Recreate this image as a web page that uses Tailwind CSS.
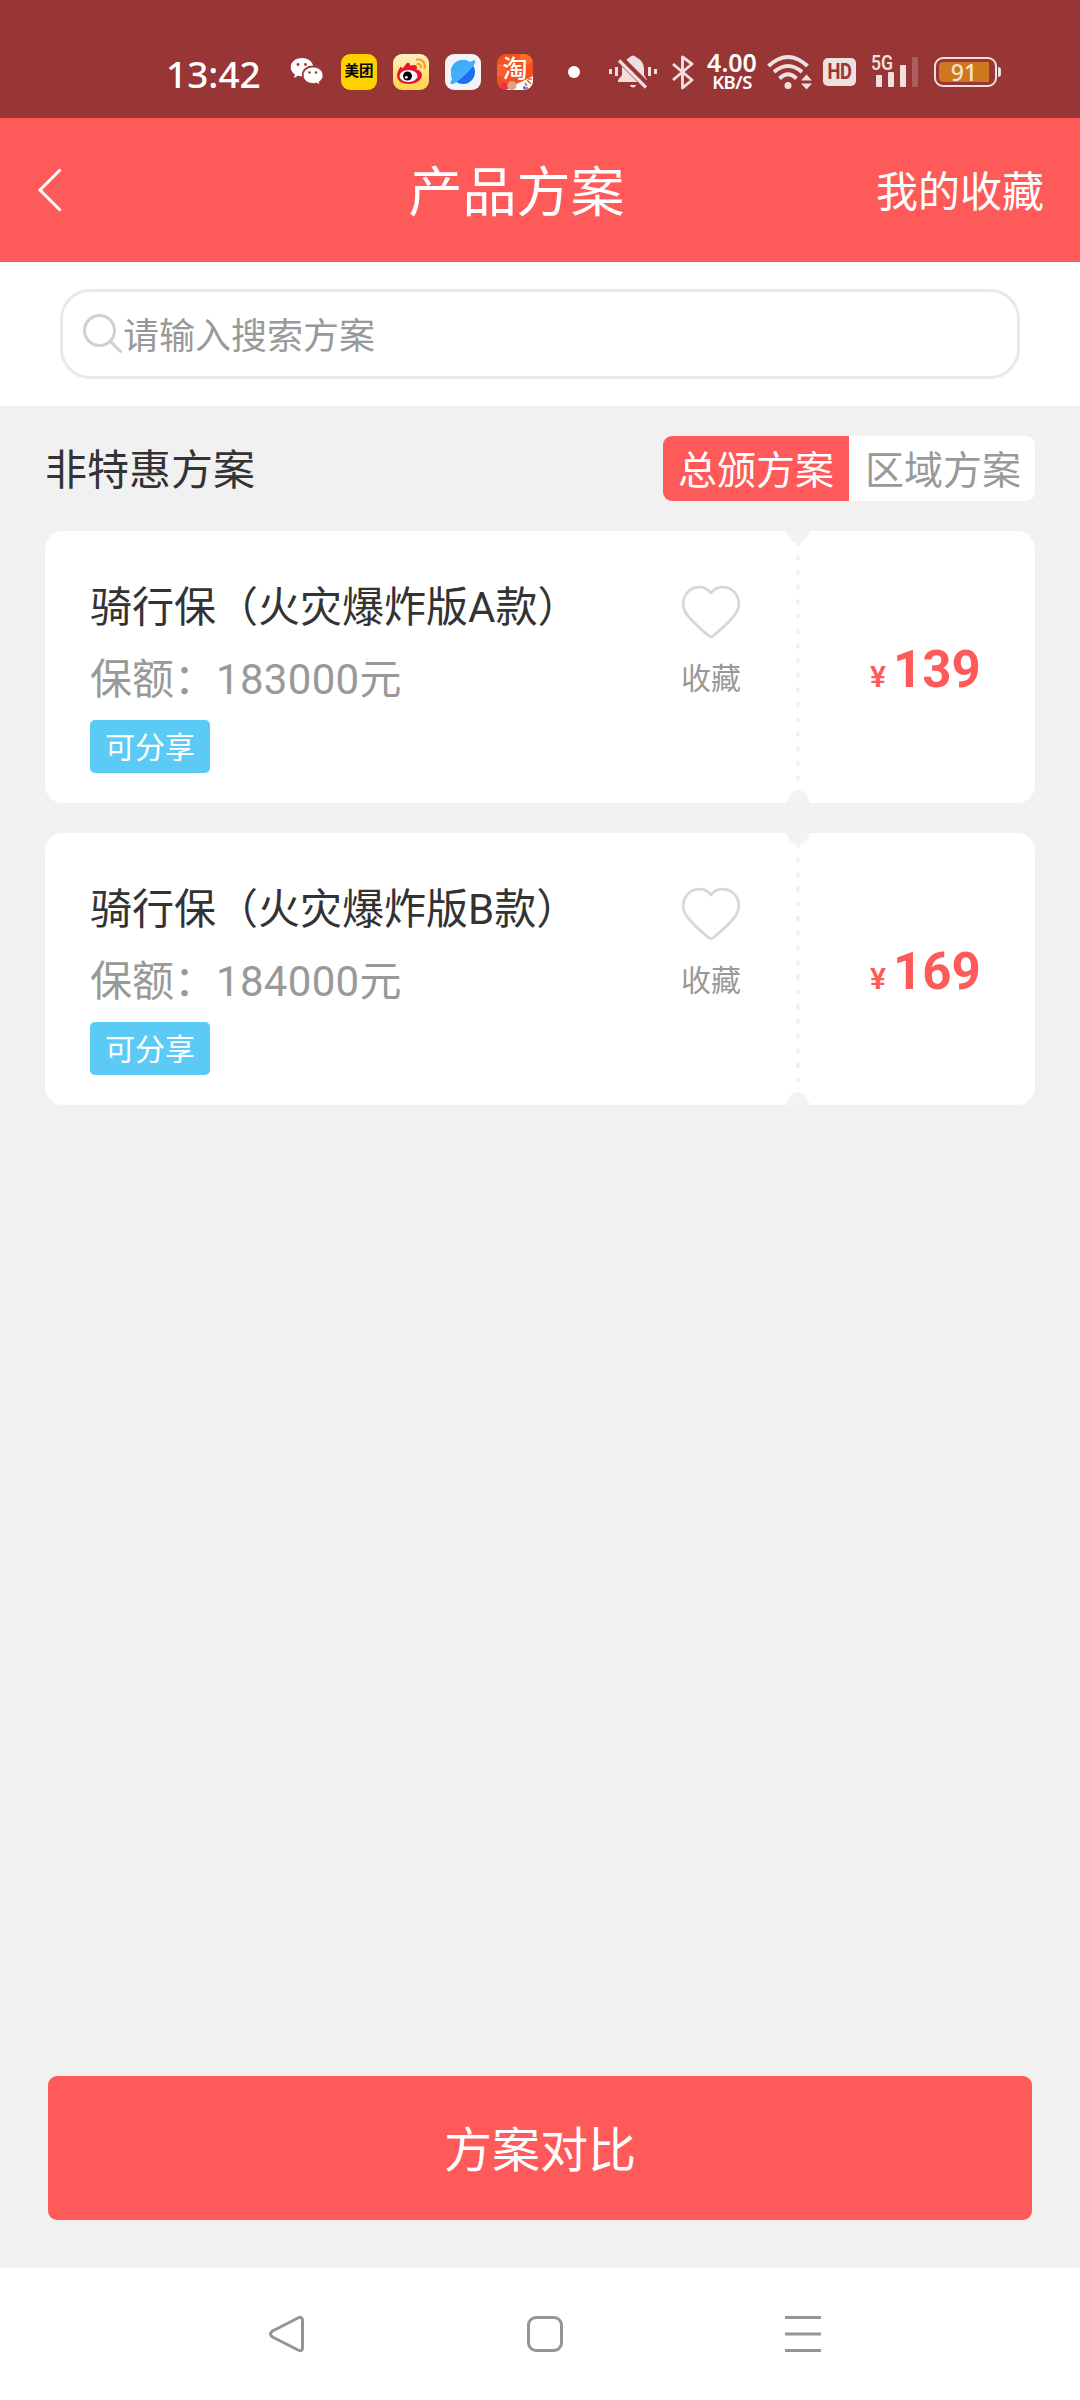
<!DOCTYPE html>
<html lang="zh-CN">
<head>
<meta charset="utf-8">
<title>产品方案</title>
<script src="https://cdn.jsdelivr.net/npm/@tailwindcss/browser@4"></script>
</head>
<body class="bg-[#f1f1f1]">
<div class="w-[1080px] h-[2400px] flex flex-col overflow-hidden font-[Roboto,'Noto_Sans_CJK_SC',sans-serif] text-[#333]">

  <!-- status bar -->
  <div class="h-[118px] shrink-0 bg-[#983535] flex items-start">
    <div class="w-full h-[90px] mt-[27px] flex items-center pl-[166px] text-white">
      <div class="w-[95px] pt-0.5 text-[37px] leading-none font-medium font-['Noto_Sans',sans-serif] whitespace-nowrap">13:42</div>
      <svg class="ml-[29px] w-[34px] h-[30px] shrink-0" viewBox="0 0 34 30">
        <path fill="#fff" d="M12 1C5.500 1 .7 5 .7 10.200c0 3 1.600 5.500 4.200 7.200L4 21l4-2.200c1.500.5 2.500.6 4 .6-1-6 4-11 11.200-10.900C22 4 17.500 1 12 1z"/>
        <path fill="#fff" stroke="#983535" stroke-width=".8" d="M23 10c-5.600 0-9.800 3.700-9.800 8.300 0 4.700 4.300 8.200 9.800 8.200 1.200 0 2.300-.2 3.500-.6L30 28l-.9-3.100c2.400-1.600 3.900-3.900 3.900-6.500C33 13.700 28.700 10 23 10z"/>
        <g fill="#983535"><circle cx="8" cy="7.500" r="1.400"/><circle cx="15.500" cy="7.500" r="1.400"/><circle cx="19.500" cy="15.500" r="1.200"/><circle cx="26" cy="15.500" r="1.200"/></g>
      </svg>
      <div class="ml-[17px] size-9 shrink-0 rounded-[9px] bg-[#ffd000] text-black text-[14.5px] leading-none font-bold flex items-center justify-center whitespace-nowrap">美团</div>
      <svg class="ml-4 size-9 shrink-0" viewBox="0 0 36 36">
        <defs><linearGradient id="wb" x1="0" y1="0" x2="0" y2="1"><stop offset="0" stop-color="#fff0c4"/><stop offset="1" stop-color="#ffd447"/></linearGradient></defs>
        <rect width="36" height="36" rx="9" fill="url(#wb)"/>
        <path fill="#e6162d" d="M14 9c2-.8 3.500.5 3 3 3-1.400 7-1.500 7 1.500 0 1-.5 1.500-.5 2 3 .8 5.500 2.500 5.500 5.500C29 26 23 30 16 30S4 26.500 4 21.500C4 18 6 14.500 8 12.500l1.500 2z"/>
        <ellipse cx="15.500" cy="22" rx="9" ry="6" fill="#fff"/><circle cx="14.500" cy="22" r="4.500" fill="#000"/><circle cx="13.300" cy="23.300" r="1.400" fill="#fff"/>
        <path fill="none" stroke="#f9a02c" stroke-width="2.200" stroke-linecap="round" d="M24 5.500c5-.8 9 3.500 7.500 8.500M24.500 10c2.300-.3 3.800 1.300 3.300 3.300"/>
      </svg>
      <svg class="ml-4 size-9 shrink-0" viewBox="0 0 36 36">
        <defs><linearGradient id="pl" x1="0" y1="0" x2="1" y2="1"><stop offset="0" stop-color="#3ba9fa"/><stop offset="1" stop-color="#4bb6fb"/></linearGradient></defs>
        <rect width="36" height="36" rx="9" fill="#f3f4f8"/>
        <circle cx="18" cy="18" r="12" fill="#1f6df2"/>
        <path fill="url(#pl)" d="M6 20C5 13 10 6 18 6c3 0 5 .8 7 2 3-2 5-2 5.300-1.200C31 9 28 13 22 19 14 27 8 31 6 30c-1-.5-.5-2.500 1-5-.5-1.500-1-3-1-5z"/>
      </svg>
      <div class="relative ml-4 size-9 shrink-0 rounded-[9px] overflow-hidden bg-[#f4511e] text-white flex items-start justify-center">
        <svg class="absolute inset-0 size-9" viewBox="0 0 36 36"><circle cx="30" cy="3" r="7" fill="#fb6d2a"/><circle cx="3" cy="16" r="6" fill="#f9642a"/><path fill="#fff" d="M36 22v14H10l7-5 9-4z"/><circle cx="7" cy="32" r="3.500" fill="#e83052"/><circle cx="15" cy="31.500" r="4.500" fill="#d9a385"/><path d="M28 29l2 3m0-6l4 4m-3-5l4 0" stroke="#e95b31" stroke-width="1.500"/><path d="M27 32l1 4m-2-2l5 0" stroke="#3c72d9" stroke-width="1.500"/></svg>
        <div class="relative mt-[3px] text-[25px] leading-[25px] font-medium">淘</div>
      </div>
      <div class="ml-[35px] size-3 shrink-0 rounded-full bg-white"></div>
      <svg class="ml-[28px] w-[50px] h-[36px] shrink-0" viewBox="0 0 50 36">
        <g fill="#f0dfdf"><path d="M1 15h3v5H1zM7 13h3v9H7zM40 13h3v9h-3zM46 15h3v5h-3zM22 3q3-3 6 0l3 2c3 2 5 6 5 10v6l3 5v2H10v-2l4-5v-6c0-5 3-9 8-12z"/><path d="M21.500 31h7q-3.500 5-7 0z"/></g>
        <path d="M12 5l28 28" stroke="#983535" stroke-width="8"/><path d="M11 6.500l27 27" stroke="#f0dfdf" stroke-width="3.200"/>
      </svg>
      <svg class="ml-[14px] w-[22px] h-[36px] shrink-0" viewBox="0 0 22 36"><path fill="none" stroke="#f0dfdf" stroke-width="2.900" stroke-linejoin="round" d="M1 10l19 16-9.500 8V3L20 10 1 26"/></svg>
      <div class="ml-[11px] w-[54px] shrink-0 flex flex-col items-center font-['Noto_Sans',sans-serif] font-semibold">
        <div class="text-[25px] leading-[19px]">4.00</div>
        <div class="text-[18.500px] leading-[19px] tracking-[-0.5px]">KB/S</div>
      </div>
      <svg class="ml-[8px] w-[46px] h-[36px] shrink-0" viewBox="0 0 46 36">
        <g fill="none" stroke="#f0dfdf" stroke-width="4"><path d="M1.500 12Q21-6 40.500 12"/><path d="M7 18Q21 6 35 18"/><path d="M12.500 24.500q8.500-8.500 17 0"/></g>
        <circle cx="21" cy="31.500" r="3.500" fill="#f0dfdf"/><path fill="#f0dfdf" d="M34 26.500l5.500-6 5.500 6zM34 29.500h11l-5.500 6z"/>
      </svg>
      <div class="ml-[10px] w-[33px] h-[28px] shrink-0 rounded-[5px] bg-[#f0dfdf] text-[#983535] text-[22px] leading-none font-bold flex items-center justify-center tracking-[-0.5px]"><span class="scale-x-[0.83]">HD</span></div>
      <div class="relative ml-[15px] w-[47px] h-[36px] shrink-0 flex items-end gap-[6px] pl-[5px] pb-[3px]">
        <div class="absolute left-0 top-[1px] text-[20px] leading-[16px] font-semibold text-[#f0dfdf] origin-left scale-x-[0.88]">5G</div>
        <div class="w-[6px] h-[12px] rounded-[1px] bg-[#f0dfdf]"></div>
        <div class="w-[6px] h-[15px] rounded-[1px] bg-[#f0dfdf]"></div>
        <div class="w-[6px] h-[22px] rounded-[1px] bg-[#f0dfdf]"></div>
        <div class="w-[6px] h-[30px] rounded-[1px] bg-[#ad5d5d]"></div>
      </div>
      <div class="ml-[16px] w-[63px] h-[30px] shrink-0 rounded-[9px] border-2 border-[#f0dfdf] p-[3px] flex">
        <div class="w-[50px] h-full rounded-l-[4px] bg-[#cd781f] text-[#f6e3cd] text-[23px] leading-[21px] text-center font-medium font-['Noto_Sans',sans-serif]">91</div>
      </div>
      <div class="ml-[1px] w-[3px] h-[10px] rounded-r bg-[#f0dfdf]"></div>
    </div>
  </div>

  <!-- title bar -->
  <div class="h-[144px] shrink-0 bg-[#ff5a5a] text-white flex items-center justify-between pl-[36px] pr-[36px]">
    <svg class="w-[168px] h-[46px]" viewBox="0 0 168 46"><path fill="none" stroke="#fff" stroke-width="3" d="M24.500 2.500L4 23l20.500 20.500"/></svg>
    <div class="pt-[7px] text-[54px] leading-none -ml-[47px] w-[216px] whitespace-nowrap">产品方案</div>
    <div class="pt-[5px] text-[42px] leading-none">我的收藏</div>
  </div>

  <!-- search -->
  <div class="h-[144px] shrink-0 bg-white px-[60px] pt-[27px]">
    <div class="h-[90px] rounded-[30px] border-[3px] border-[#ebe8e8] flex items-center pl-[20px]">
      <svg class="w-[40px] h-[41px]" viewBox="0 0 40 41"><g fill="none" stroke="#d0d0d0" stroke-width="3"><circle cx="16.500" cy="16.500" r="15"/><path d="M27.500 27.500l11 11"/></g></svg>
      <div class="pt-[5px] text-[36px] leading-none text-[#999]">请输入搜索方案</div>
    </div>
  </div>

  <!-- list heading -->
  <div class="shrink-0 pt-[30px] px-[45px] flex items-center justify-between">
    <div class="pt-[5px] text-[42px] leading-none">非特惠方案</div>
    <div class="h-[65px] flex rounded-[9px] overflow-hidden text-[39px] leading-[70px]">
      <div class="w-[186px] text-center bg-[#ff5a5a] text-white">总颁方案</div>
      <div class="w-[186px] pl-[2px] text-center bg-white text-[#999]">区域方案</div>
    </div>
  </div>

  <!-- plan cards -->
  <div class="grow px-[45px] pt-[30px] flex flex-col gap-[30px]">
    <div class="relative h-[272px] rounded-[18px] bg-white flex overflow-hidden">
      <div class="w-[592px] pl-[45px] pt-[53px] flex flex-col items-start whitespace-nowrap">
        <div class="text-[42px] leading-[48px]">骑行保（火灾爆炸版A款）</div>
        <div class="mt-[24px] text-[42px] leading-[48px] text-[#999]">保额：<span class="tracking-[0.3px]">183000</span>元</div>
        <div class="mt-[16px] w-[120px] h-[53px] rounded-[5px] bg-[#5bcbf6] text-white text-[30px] leading-[55px] text-center">可分享</div>
      </div>
      <div class="w-[148px] pt-[53px] flex flex-col items-center">
        <svg class="w-[60px] h-[56px]" viewBox="0 0 60 56"><path fill="none" stroke="#d8d8d8" stroke-width="2.800" stroke-linejoin="round" d="M30 9C25 2 15 1.500 9 6 2 11.500 .5 20 4 27.500c5 8.500 15.500 17.500 24 24.500q2 1.500 4 0c8.500-7 19-16 24-24.500C59.500 20 58 11.500 51 6 45 1.500 35 2 30 9z"/></svg>
        <div class="mt-[22px] text-[30px] leading-[34px] text-[#999]">收藏</div>
      </div>
      <svg class="w-[26px] h-[272px]" viewBox="0 0 26 272"><path stroke="#eee" stroke-width="3" stroke-dasharray="5 9.700" d="M13 9.500v252"/><g fill="#f3f3f3"><path d="M1 0h24q-4 12-12 12T1 0zM1 272h24q-4-13-12-13T1 272z"/></g></svg>
      <div class="w-[222px] pl-[59px] pt-[109px] flex items-baseline text-[#ff5a5a]">
        <span class="text-[30px] leading-[60px] w-[23px] font-semibold">¥</span><span class="text-[51px] leading-[60px] font-bold">139</span>
      </div>
    </div>
    <div class="relative h-[272px] rounded-[18px] bg-white flex overflow-hidden">
      <div class="w-[592px] pl-[45px] pt-[53px] flex flex-col items-start whitespace-nowrap">
        <div class="text-[42px] leading-[48px]">骑行保（火灾爆炸版B款）</div>
        <div class="mt-[24px] text-[42px] leading-[48px] text-[#999]">保额：<span class="tracking-[0.3px]">184000</span>元</div>
        <div class="mt-[16px] w-[120px] h-[53px] rounded-[5px] bg-[#5bcbf6] text-white text-[30px] leading-[55px] text-center">可分享</div>
      </div>
      <div class="w-[148px] pt-[53px] flex flex-col items-center">
        <svg class="w-[60px] h-[56px]" viewBox="0 0 60 56"><path fill="none" stroke="#d8d8d8" stroke-width="2.800" stroke-linejoin="round" d="M30 9C25 2 15 1.500 9 6 2 11.500 .5 20 4 27.500c5 8.500 15.500 17.500 24 24.500q2 1.500 4 0c8.500-7 19-16 24-24.500C59.500 20 58 11.500 51 6 45 1.500 35 2 30 9z"/></svg>
        <div class="mt-[22px] text-[30px] leading-[34px] text-[#999]">收藏</div>
      </div>
      <svg class="w-[26px] h-[272px]" viewBox="0 0 26 272"><path stroke="#eee" stroke-width="3" stroke-dasharray="5 9.700" d="M13 9.500v252"/><g fill="#f3f3f3"><path d="M1 0h24q-4 12-12 12T1 0zM1 272h24q-4-13-12-13T1 272z"/></g></svg>
      <div class="w-[222px] pl-[59px] pt-[109px] flex items-baseline text-[#ff5a5a]">
        <span class="text-[30px] leading-[60px] w-[23px] font-semibold">¥</span><span class="text-[51px] leading-[60px] font-bold">169</span>
      </div>
    </div>
  </div>

  <!-- compare button -->
  <div class="shrink-0 px-12 pb-12">
    <div class="h-[144px] rounded-[9px] bg-[#ff5a5a] text-white text-[48px] leading-[149px] text-center">方案对比</div>
  </div>

  <!-- system navigation -->
  <div class="h-[132px] shrink-0 bg-white flex items-center pl-[268px]">
    <svg class="w-[554px] h-[38px]" viewBox="0 0 554 38"><g fill="none" stroke="#949494" stroke-width="3"><path stroke-linejoin="round" d="M30 3Q34 1 34.500 5v28q-.5 4-4.500 2L4.500 22q-4-3 0-6z"/><rect x="260.500" y="2.500" width="33" height="33" rx="7.500"/><path d="M517 2.500h36M517 19h36M517 35.500h36"/></g></svg>
  </div>
</div>
</body>
</html>
